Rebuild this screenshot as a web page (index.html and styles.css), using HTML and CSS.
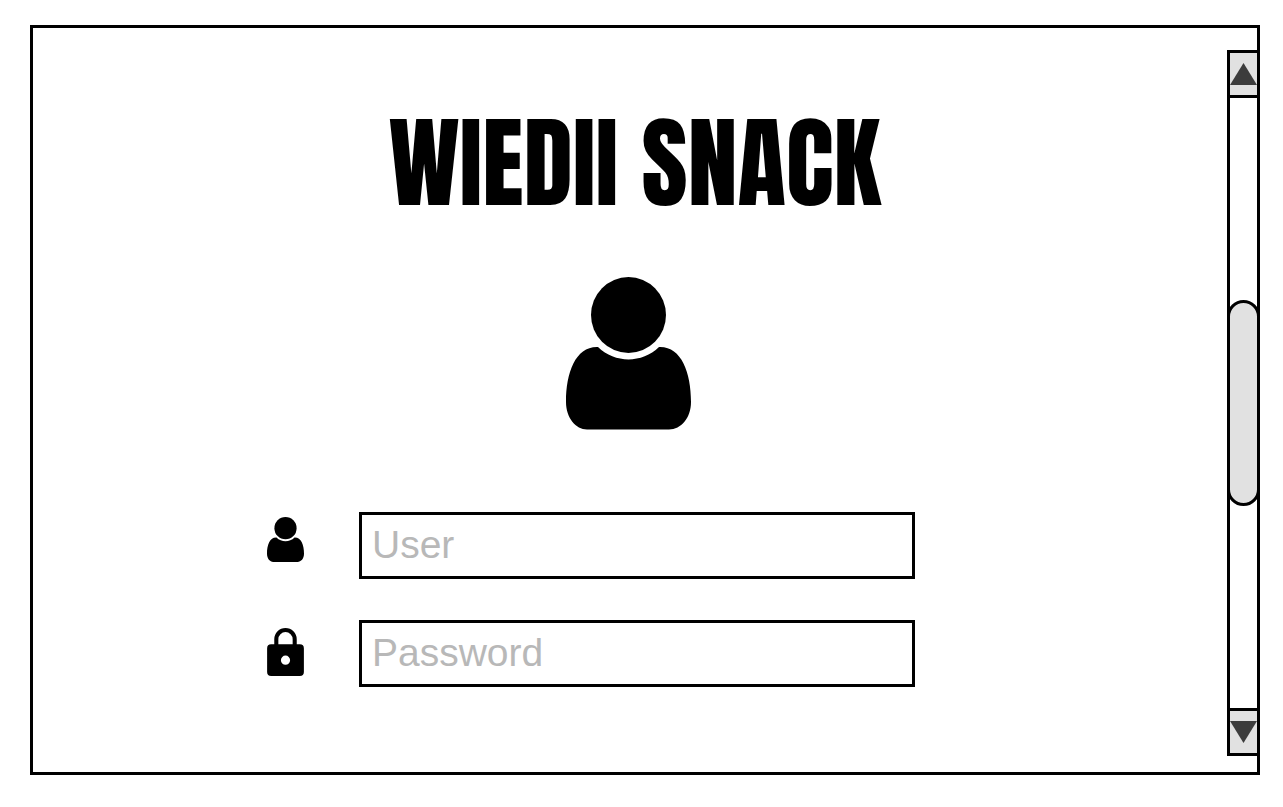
FILE: index.html
```html
<!DOCTYPE html>
<html lang="en">
<head>
<meta charset="utf-8">
<meta name="viewport" content="width=device-width, initial-scale=1">
<title>Wiedii Snack</title>
<link rel="stylesheet" href="styles.css">
</head>
<body>
<div class="frame">
  <main class="content">
    <h1 class="title">WIEDII SNACK</h1>
    <svg class="avatar" viewBox="0 0 125 153" aria-hidden="true">
      <ellipse cx="62.5" cy="38" rx="37.500" ry="38"/>
      <path d="M32 70C49 86.500 76 86.500 93 70C115 69 125 95 125 125C125 141 115 152.500 103 152.500H21C10 152.500 0 141 0 125C0 95 10 69 32 70Z"/>
    </svg>
    <form class="login">
      <label class="field-icon" for="user" aria-label="User">
        <svg class="user-icon" viewBox="0 0 125 153" preserveAspectRatio="none" aria-hidden="true">
          <ellipse cx="62.5" cy="38" rx="37.500" ry="38"/>
          <path d="M32 70C49 87 76 87 93 70C115 69 125 95 125 125C125 141 115 153 103 153H21C10 153 0 141 0 125C0 95 10 69 32 70Z"/>
        </svg>
      </label>
      <input class="field" id="user" type="text" placeholder="User">
      <label class="field-icon" for="password" aria-label="Password">
        <svg class="lock-icon" viewBox="0 0 36 47" aria-hidden="true">
          <path fill="none" stroke="#000" stroke-width="4" d="M9 18V11a9 9 0 0 1 18 0V18"/>
          <path fill-rule="evenodd" d="M4 16H32Q36 16 36 20V43Q36 47 32 47H4Q0 47 0 43V20Q0 16 4 16ZM18 27a4.500 4.500 0 1 0 0 9a4.500 4.500 0 1 0 0-9Z"/>
        </svg>
      </label>
      <input class="field" id="password" type="password" placeholder="Password">
    </form>
  </main>
  <div class="scrollbar">
    <button class="arrow" type="button" aria-label="Scroll up">
      <svg class="triangle" viewBox="0 0 27 22" aria-hidden="true"><path d="M13.500 0L27 22H0Z"/></svg>
    </button>
    <div class="track"><div class="thumb"></div></div>
    <button class="arrow" type="button" aria-label="Scroll down">
      <svg class="triangle" viewBox="0 0 27 22" aria-hidden="true"><path d="M0 0H27L13.500 22Z"/></svg>
    </button>
  </div>
</div>
</body>
</html>
```

FILE: styles.css
```css
* {
  box-sizing: border-box;
}

body {
  margin: 0;
  padding: 25px 23px 32px 30px;
  min-height: 100vh;
  display: flex;
  background: #fff;
  color: #000;
  font-family: "Liberation Sans", Arial, sans-serif;
}

.frame {
  flex: 1;
  display: flex;
  border: 3px solid #000;
}

.content {
  flex: 1;
  min-width: 0;
  display: flex;
  flex-direction: column;
  align-items: center;
  padding: 81px 0 84px;
}

.title {
  margin: 0 0 60px 9px;
  font-family: Anton, Impact, "Liberation Sans Narrow", "Liberation Sans", sans-serif;
  font-size: 100px;
  font-weight: 400;
  line-height: 108px;
  white-space: nowrap;
}

.avatar {
  width: 125px;
  height: 153px;
  margin-right: 4px;
  flex: none;
}

.login {
  align-self: stretch;
  display: grid;
  grid-template-columns: 37px 1fr;
  column-gap: 55px;
  row-gap: 41px;
  margin-top: 82px;
  padding: 0 312px 0 234px;
}

.field-icon {
  display: flex;
  align-items: flex-start;
  padding-top: 5px;
}

.user-icon {
  width: 37px;
  height: 45px;
}

.lock-icon {
  width: 37px;
  height: 48px;
  margin-top: 3px;
}

.field {
  width: 100%;
  min-width: 0;
  height: 67px;
  padding: 0 10px 2px;
  border: 3px solid #000;
  border-radius: 0;
  background: #fff;
  color: #000;
  font: 39px "Liberation Sans", Arial, sans-serif;
}

.field::placeholder {
  color: #b8b8b8;
  opacity: 1;
}

.scrollbar {
  width: 33px;
  margin: 22px -3px 16px 0;
  display: flex;
  flex-direction: column;
}

.arrow {
  height: 48px;
  flex: none;
  display: flex;
  justify-content: center;
  padding: 10px 0 0;
  border: 3px solid #000;
  border-radius: 0;
  background: #e1e1e1;
}

.triangle {
  width: 27px;
  height: 22px;
  flex: none;
  fill: #3c3c3c;
}

.track {
  flex: 1;
  display: flex;
  flex-direction: column;
  border: solid #000;
  border-width: 0 3px;
}

.thumb {
  height: 206px;
  margin: 202px -3px 0;
  border: 3px solid #000;
  border-radius: 17px;
  background: #e1e1e1;
}
```
